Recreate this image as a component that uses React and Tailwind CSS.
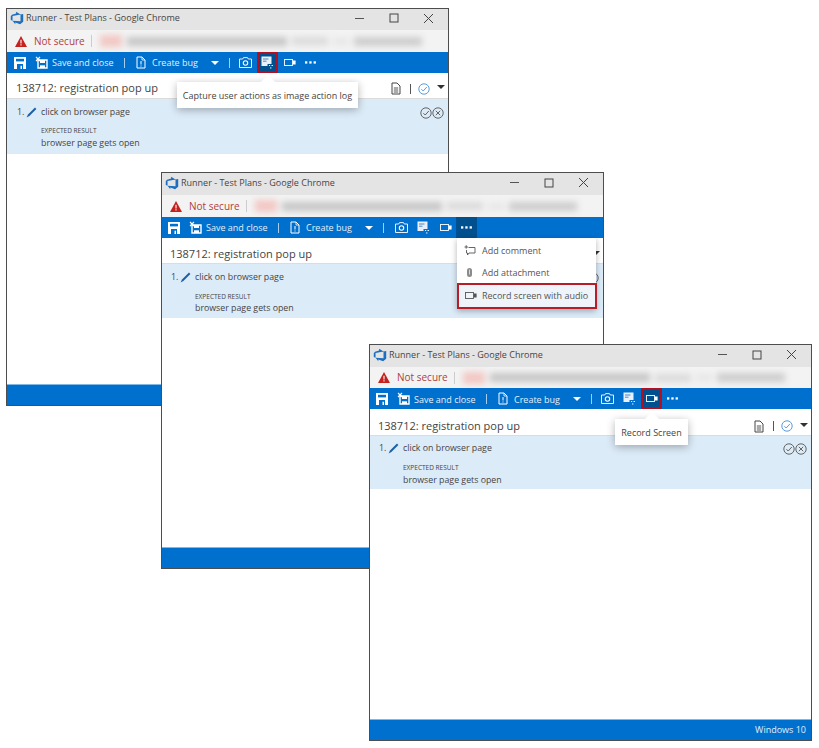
const FONT = "font-['Open_Sans','Noto_Sans',sans-serif]";

function AzureLogo() {
  return (
    <svg width="14" height="14" viewBox="0 0 18 18" className="shrink-0">
      <path d="M17 4v9.74l-4 3.28-6.2-2.26V17l-3.51-4.59 10.23.8V4.44zm-3.41.49L7.85 1v2.29L2.58 4.84 1 6.87v4.61l2.26 1V6.57z" fill="#1c6fc0" />
    </svg>
  );
}

function WinControls() {
  return (
    <div className="flex items-center ml-auto">
      <svg width="11" height="11" viewBox="0 0 11 11" className="mr-[24px]"><path d="M1 5.5h9" stroke="#555" strokeWidth="1" /></svg>
      <svg width="10" height="10" viewBox="0 0 10 10" className="mr-[24px]"><rect x="1" y="1" width="8" height="8" fill="none" stroke="#444" strokeWidth="1" /></svg>
      <svg width="11" height="11" viewBox="0 0 11 11" className="mr-[14px]"><path d="M1 1l9 9M10 1l-9 9" stroke="#444" strokeWidth="1" /></svg>
    </div>
  );
}

function SaveIcon() {
  return (
    <svg width="12" height="12" viewBox="0 0 12 12" className="shrink-0">
      <path d="M0 0h12v12H0z" fill="#fff" />
      <path d="M2 1.8h8v2.6H2z" fill="#0070cf" />
      <path d="M3 7h6v5H3z" fill="#0070cf" />
      <path d="M6.5 8.8h1.5V12H6.5z" fill="#fff" />
    </svg>
  );
}
function SaveCloseIcon() {
  return (
    <svg width="13" height="13" viewBox="0 0 13 13" className="shrink-0">
      <path d="M3 4h9v8H3z" fill="none" stroke="#fff" strokeWidth="1.4" />
      <path d="M5 4h5v3H5z" fill="#fff" />
      <path d="M5 9.3h5V12H5z" fill="#fff" />
      <path d="M1 1l4 4M5 1L1 5" stroke="#fff" strokeWidth="1.1" />
    </svg>
  );
}
function DocIcon({ color = "#fff" }) {
  return (
    <svg width="10" height="13" viewBox="0 0 10 13" className="shrink-0">
      <path d="M1 1h5l3 3v8H1z" fill="none" stroke={color} strokeWidth="1" />
      <path d="M6 1v3h3" fill="none" stroke={color} strokeWidth="0.8" />
      <path d="M5 5v3.5M5 9.5v1" stroke={color} strokeWidth="1" />
    </svg>
  );
}
function ReportIcon() {
  return (
    <svg width="10" height="13" viewBox="0 0 10 13" className="shrink-0">
      <path d="M1 1h5l3 3v8H1z" fill="none" stroke="#444" strokeWidth="1" />
      <path d="M2.8 6h4.4M2.8 8h4.4M2.8 10h4.4" stroke="#444" strokeWidth="0.9" />
    </svg>
  );
}
function CameraIcon() {
  return (
    <svg width="13" height="11" viewBox="0 0 13 11" className="shrink-0">
      <path d="M.5 2h3.2l.8-1.4h4L9.3 2h3.2v8.5H.5z" fill="none" stroke="#fff" strokeWidth="0.9" />
      <circle cx="6.5" cy="6" r="2.2" fill="none" stroke="#fff" strokeWidth="1.1" />
    </svg>
  );
}
function LogIcon() {
  return (
    <svg width="13" height="13" viewBox="0 0 13 13" className="shrink-0">
      <path d="M.5.5h10v7.5H6.5v2h-6z" fill="#e8f1fa" />
      <path d="M2 3h5.5M2 5.2h3.5" stroke="#4f87bd" strokeWidth="1" />
      <path d="M8 9.5h1.2M10.5 9.5h1.5M9.8 11.2v1.5" stroke="#fff" strokeWidth="0.9" />
    </svg>
  );
}
function VideoIcon({ color = "#fff" }) {
  return (
    <svg width="12" height="7" viewBox="0 0 12 7" className="shrink-0">
      <rect x="0.5" y="0.5" width="8" height="6" fill="none" stroke={color} strokeWidth="0.9" />
      <rect x="9" y="1.5" width="2.6" height="4" fill={color} />
    </svg>
  );
}
function Dots() {
  return (
    <svg width="11" height="3" viewBox="0 0 11 3" className="shrink-0">
      <rect x="0" y="0.3" width="2.3" height="2.3" fill="#fff" />
      <rect x="4.3" y="0.3" width="2.3" height="2.3" fill="#fff" />
      <rect x="8.6" y="0.3" width="2.3" height="2.3" fill="#fff" />
    </svg>
  );
}
function Pencil() {
  return (
    <svg width="11" height="11" viewBox="0 0 11 11" className="shrink-0">
      <path d="M9 .6l1.4 1.4L3.4 9 .6 10.4 2 7.6z" fill="#1b5fa8" />
    </svg>
  );
}
function CircleCheck({ color = "#555", size = 12 }) {
  return (
    <svg width={size} height={size} viewBox="0 0 12 12" className="shrink-0">
      <circle cx="6" cy="6" r="5.2" fill="none" stroke={color} strokeWidth="0.9" />
      <path d="M3.4 6.2 5.2 8l3.6-4" fill="none" stroke={color} strokeWidth="0.9" />
    </svg>
  );
}
function CircleX() {
  return (
    <svg width="12" height="12" viewBox="0 0 12 12" className="shrink-0">
      <circle cx="6" cy="6" r="5.2" fill="none" stroke="#555" strokeWidth="0.9" />
      <path d="M3.8 3.8l4.4 4.4M8.2 3.8l-4.4 4.4" stroke="#555" strokeWidth="0.9" />
    </svg>
  );
}
function Caret({ color = "#fff" }) {
  return (
    <svg width="8" height="4" viewBox="0 0 8 4" className="shrink-0"><path d="M0 0h8L4 4z" fill={color} /></svg>
  );
}
function Sep() {
  return <div className="w-px h-[10px] bg-[#a9cdec] shrink-0" />;
}

function Slot({ active, children, className = "" }) {
  return (
    <div className={`w-[21px] h-[21px] flex items-center justify-center shrink-0 ${active === "dark" ? "bg-[#00508f]" : ""} ${active === "red" ? "bg-[#00508f] outline-2 -outline-offset-2 outline-[#b01020]" : ""} ${className}`}>
      {children}
    </div>
  );
}

function BlurUrl() {
  return (
    <div className="flex items-center ml-[8px] w-[325px] shrink-0 gap-[5px] blur-[3px]">
      <div className="w-[22px] h-[12px] bg-[#f2c8c4]" />
      <div className="w-[160px] h-[9px] bg-[#c6c6c6]" />
      <div className="w-[36px] h-[8px] bg-[#dadada]" />
      <div className="w-[16px] h-[7px] bg-[#e6e6e6]" />
      <div className="w-[68px] h-[9px] bg-[#cdcdcd]" />
    </div>
  );
}

function Tooltip({ text, left, top, width, caret }) {
  return (
    <div style={{ left, top, width }} className="absolute z-20 h-[26px] pt-px bg-white flex items-center justify-center text-[9px] text-[#444] whitespace-nowrap shadow-[0_2px_8px_rgba(0,0,0,0.3)]">
      <div style={{ left: caret }} className="absolute top-[-5px] w-[10px] h-[10px] bg-white rotate-45" />
      <span className="relative">{text}</span>
    </div>
  );
}

function Menu() {
  const items = [
    ["Add comment", <svg key="c" width="12" height="11" viewBox="0 0 12 11"><path d="M4.5 2.5H11V8H5L3.5 10V8H2.5V5M.5 2h3.5M2.2.2v3.5" fill="none" stroke="#555" strokeWidth="0.9" /></svg>],
    ["Add attachment", <svg key="a" width="7" height="11" viewBox="0 0 7 11"><rect x="1" y="1" width="5" height="9" rx="2.5" fill="#8b8b8b" /><path d="M3.5 2.5v5" stroke="#eee" strokeWidth="0.8" /></svg>],
  ];
  return (
    <div className="absolute z-20 left-[295px] top-[65px] w-[139px] pt-px bg-white shadow-[0_2px_6px_rgba(0,0,0,0.3)] text-[9px] text-[#555]">
      {items.map(([t, icon]) => (
        <div key={t} className="h-[22px] pt-px flex items-center">
          <div className="w-[25px] flex justify-center">{icon}</div>
          <span>{t}</span>
        </div>
      ))}
      <div className="h-[26px] pb-px flex items-center border-2 border-[#b51d28] bg-[#eef4fa] w-[140px]">
        <div className="w-[23px] flex justify-center"><VideoIcon color="#555" /></div>
        <span>Record screen with audio</span>
      </div>
    </div>
  );
}

function BrowserWindow({ left, top, width, height, active, overlay, footer, titleH, addrH, rowH, rowPl, rowPt, stepH, stepPl, stepPt, expMt, openMt, barPl, barText, camMl }) {
  return (
    <div
      style={{ left, top, width, height }}
      className={`absolute flex flex-col bg-white border border-[#4d4d4d] ${FONT}`}
    >
      <div className={`${titleH} bg-[#e4e4e4] flex items-center pl-[3px] pb-[3px] text-[9px] text-[#444] shrink-0`}>
        <AzureLogo />
        <span className="ml-[2px]">Runner - Test Plans - Google Chrome</span>
        <WinControls />
      </div>
      <div className={`${addrH} bg-[#f3f3f3] flex items-center pl-[8px] text-[10px] text-[#b04040] shrink-0 overflow-hidden`}>
        <svg width="12" height="11" viewBox="0 0 12 11" className="shrink-0"><path d="M6 0l6 11H0z" fill="#c5221f" /><path d="M6 3.8v3.6M6 8.3v1.2" stroke="#fff" strokeWidth="1.1" /></svg>
        <span className="ml-[7px] whitespace-nowrap">Not secure</span>
        <div className="w-px h-[12px] bg-[#ccc] ml-[6px] shrink-0" />
        <BlurUrl />
      </div>
      <div className={`h-[21px] bg-[#0070cf] flex items-center ${barPl} text-[9px] text-[#e3effa] shrink-0`}>
        <SaveIcon />
        <div className="ml-[9px]"><SaveCloseIcon /></div>
        <span className={`ml-[4px] w-[61px] whitespace-nowrap ${barText}`}>Save and close</span>
        <div className="ml-[11px]"><Sep /></div>
        <div className="ml-[11px]"><DocIcon /></div>
        <span className={`ml-[6px] w-[46px] whitespace-nowrap ${barText}`}>Create bug</span>
        <div className="ml-[13px]"><Caret /></div>
        <div className="ml-[10px]"><Sep /></div>
        <Slot className={camMl}><CameraIcon /></Slot>
        <Slot className="ml-px" active={active === "log" ? "red" : undefined}><LogIcon /></Slot>
        <Slot className="ml-px" active={active === "video" ? "red" : undefined}><VideoIcon /></Slot>
        <Slot active={active === "dots" ? "dark" : undefined}><Dots /></Slot>
      </div>
      <div className={`${rowH} ${rowPl} ${rowPt} flex items-center pr-[3px] text-[11px] text-[#444] border-b border-[#dcdcdc] shrink-0`}>
        <span>138712: registration pop up</span>
        <div className="ml-auto flex items-center">
          <ReportIcon />
          <div className="w-px h-[10px] bg-[#555] ml-[9px]" />
          <div className="ml-[7px]"><CircleCheck color="#4a90d9" /></div>
          <div className="ml-[7px] mb-[3px]"><Caret color="#333" /></div>
        </div>
      </div>
      <div className={`${stepH} ${stepPt} ${stepPl} bg-[#dcebf8] pr-[4px] text-[8.8px] text-[#444] shrink-0`}>
        <div className="flex items-center h-[13px]">
          <span className="w-[9px]">1.</span>
          <Pencil />
          <span className="ml-[4px]">click on browser page</span>
          <div className="ml-auto flex items-center">
            <CircleCheck />
            <CircleX />
          </div>
        </div>
        <div className={`pl-[24px] ${expMt} text-[6.5px] leading-[9px]`}>EXPECTED RESULT</div>
        <div className={`pl-[24px] ${openMt} leading-[13px]`}>browser page gets open</div>
      </div>
      <div className="flex-1" />
      <div className="h-[21px] bg-[#0070cf] border-t border-[#7fb8e6] shrink-0 flex items-center justify-end pr-[5px] text-[9px] text-[#e3effa]">
        {footer}
      </div>
      {overlay}
    </div>
  );
}

export default function App() {
  return (
    <div className="relative w-[819px] h-[748px] bg-white overflow-hidden">
      <BrowserWindow
        left={6}
        top={8}
        width={443}
        height={398}
        active="log"
        titleH="h-[21px]"
        addrH="h-[22px]"
        rowH="h-[26px]"
        rowPl="pl-[9px]"
        rowPt="pt-[6px]"
        stepH="h-[55px]"
        stepPl="pl-[10px]"
        stepPt="pt-[7px]"
        expMt="mt-[7px]"
        openMt="mt-[2px]"
        barPl="pl-[7px]"
        barText="mt-px"
        camMl="ml-[5px]"
        overlay={<Tooltip text="Capture user actions as image action log" left={170} top={73} width={181} caret={86} />}
      />
      <BrowserWindow
        left={161}
        top={172}
        width={443}
        height={397}
        active="dots"
        titleH="h-[22px]"
        addrH="h-[22px]"
        rowH="h-[26px]"
        rowPl="pl-[8px]"
        rowPt="pt-[8px]"
        stepH="h-[54px]"
        stepPl="pl-[9px]"
        stepPt="pt-[7px]"
        expMt="mt-[8px]"
        openMt="mt-px"
        barPl="pl-[6px]"
        barText="mt-px"
        camMl="ml-[7px]"
        overlay={<Menu />}
      />
      <BrowserWindow
        left={369}
        top={344}
        width={443}
        height={397}
        active="video"
        footer="Windows 10"
        titleH="h-[22px]"
        addrH="h-[21px]"
        rowH="h-[27px]"
        rowPl="pl-[8px]"
        rowPt="pt-[8px]"
        stepH="h-[53px]"
        stepPl="pl-[9px]"
        stepPt="pt-[6px]"
        expMt="mt-[8px]"
        openMt="mt-[2px]"
        barPl="pl-[6px]"
        barText="mt-[2px]"
        camMl="ml-[5px]"
        overlay={<Tooltip text="Record Screen" left={245} top={74} width={73} caret={32} />}
      />
    </div>
  );
}
